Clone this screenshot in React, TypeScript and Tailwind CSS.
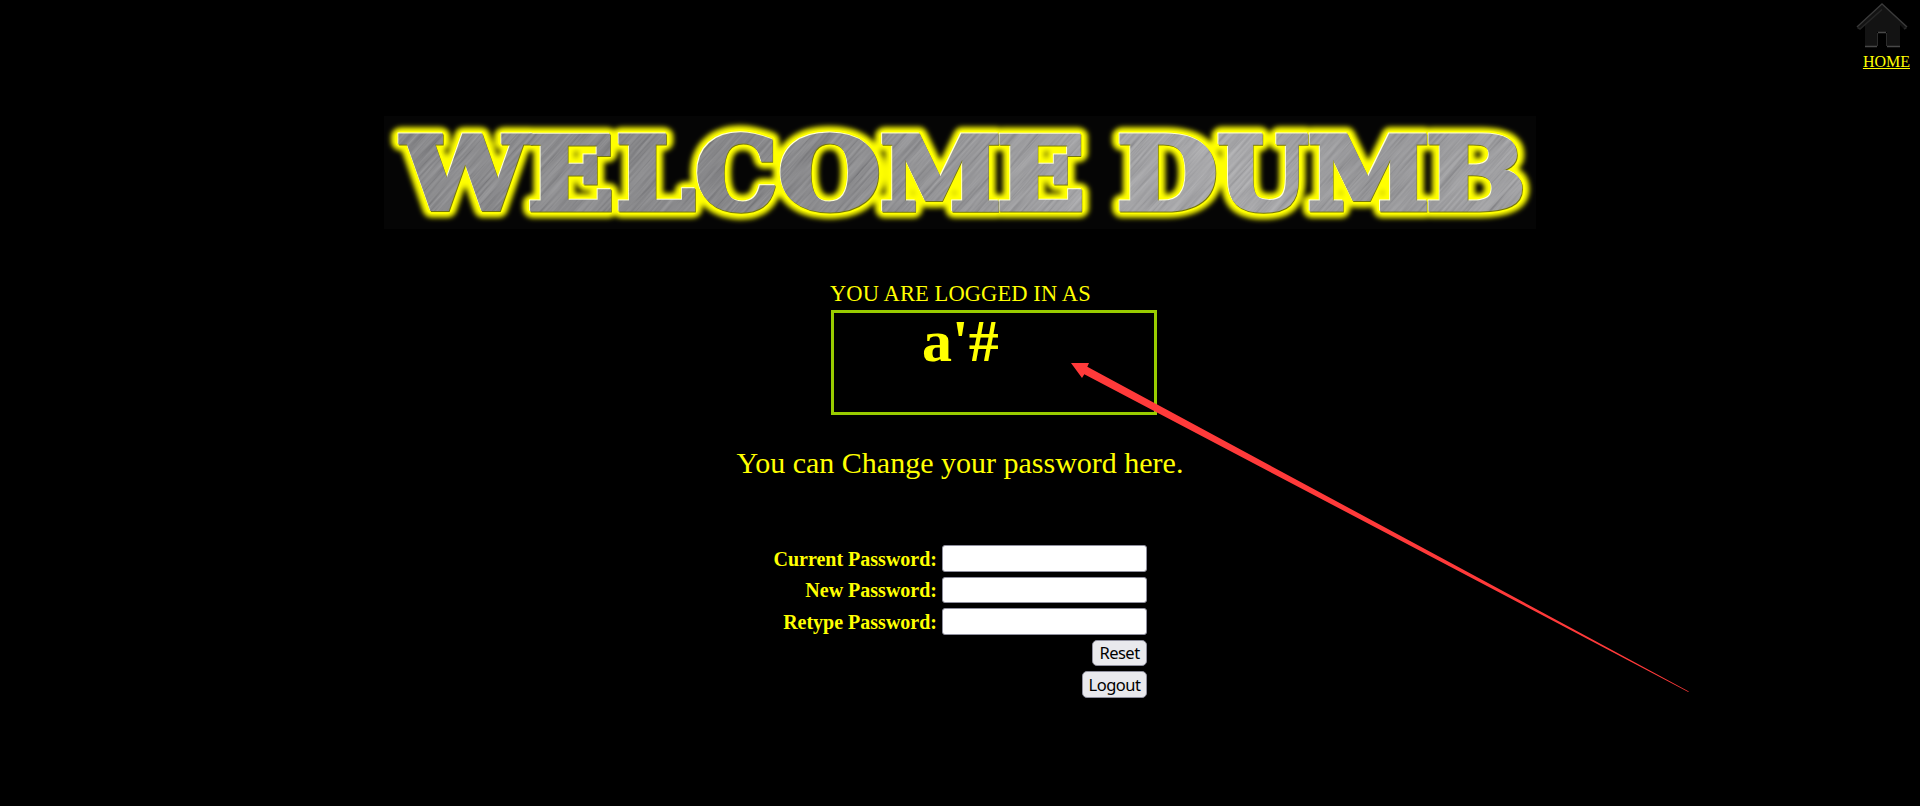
import React from "react";

type Letter = { char: string; left: number; right: number };

const BANNER: Letter[] = [
  { char: "W", left: 14.5, right: 149 },
  { char: "E", left: 145.5, right: 228 },
  { char: "L", left: 234, right: 312 },
  { char: "C", left: 313, right: 391 },
  { char: "O", left: 396.5, right: 494.5 },
  { char: "M", left: 498, right: 614.5 },
  { char: "E", left: 615, right: 698.5 },
  { char: "D", left: 735, right: 832 },
  { char: "U", left: 834, right: 925 },
  { char: "M", left: 925.5, right: 1042.5 },
  { char: "B", left: 1044, right: 1138 },
];

const FONT_SIZE = 100;
const WEIGHT = 5.5;

function placeLetters() {
  const ctx = document.createElement("canvas").getContext("2d")!;
  ctx.font = `bold ${FONT_SIZE}px "DejaVu Serif"`;
  return BANNER.map(({ char, left, right }) => {
    const m = ctx.measureText(char);
    const ink = m.actualBoundingBoxRight + m.actualBoundingBoxLeft;
    const scale = (right - left - WEIGHT) / ink;
    const x = left + WEIGHT / 2 + m.actualBoundingBoxLeft * scale;
    return { char, transform: `translate(${x} 93) scale(${scale} 1)` };
  });
}

function Letters() {
  return (
    <>
      {placeLetters().map((l, i) => (
        <text
          key={i}
          transform={l.transform}
          fontFamily="'DejaVu Serif', serif"
          fontWeight="bold"
          fontSize={FONT_SIZE}
          vectorEffect="non-scaling-stroke"
        >
          {l.char}
        </text>
      ))}
    </>
  );
}

function Banner() {
  return (
    <svg width="1152" height="113" viewBox="0 0 1152 113" className="block overflow-visible bg-[#050505]">
      <defs>
        <filter id="glow" x="-5%" y="-30%" width="110%" height="160%">
          <feGaussianBlur stdDeviation="2.6" />
        </filter>
        <filter id="brushed" x="0" y="0" width="100%" height="100%">
          <feTurbulence type="fractalNoise" baseFrequency="0.015 0.4" numOctaves="3" seed="4" />
          <feColorMatrix values="0.9 0 0 0 0  0.9 0 0 0 0  0.9 0 0 0 0.02  0 0 0 0 1" />
        </filter>
        <linearGradient id="sheen">
          <stop offset="0" stopColor="#767678" />
          <stop offset="0.12" stopColor="#7e7e80" />
          <stop offset="0.3" stopColor="#747476" />
          <stop offset="0.45" stopColor="#828284" />
          <stop offset="0.6" stopColor="#9b9b9d" />
          <stop offset="0.75" stopColor="#a4a4a6" />
          <stop offset="0.85" stopColor="#8a8a8c" />
          <stop offset="1" stopColor="#9c9c9e" />
        </linearGradient>
        <mask id="letters" maskUnits="userSpaceOnUse" x="0" y="0" width="1152" height="113">
          <g fill="#fff" stroke="#fff" strokeWidth={WEIGHT}>
            <Letters />
          </g>
        </mask>
      </defs>
      <g filter="url(#glow)" fill="#ff0" stroke="#ff0" strokeWidth="19" strokeLinejoin="round">
        <Letters />
      </g>
      <g fill="#ff0" stroke="#ff0" strokeWidth="11" strokeLinejoin="round">
        <Letters />
      </g>
      <g transform="translate(-0.9 -0.9)" fill="#ffffd8" stroke="#ffffd8" strokeWidth={WEIGHT}>
        <Letters />
      </g>
      <g transform="translate(0.7 0.8)" fill="#77770a" stroke="#77770a" strokeWidth={WEIGHT}>
        <Letters />
      </g>
      <g mask="url(#letters)">
        <rect width="1152" height="113" fill="url(#sheen)" />
        <g opacity="0.3" transform="rotate(-48 576 56)">
          <rect x="-20" y="-500" width="1192" height="1113" filter="url(#brushed)" />
        </g>
      </g>
    </svg>
  );
}

function HomeIcon() {
  return (
    <svg width="54" height="48" viewBox="0 0 54 48" className="block -translate-x-px">
      <path d="M27 5 L3 27 L5 29 L10 25 V47 H22 V32 H32 V47 H45 V25 L49 29 L52 27 Z" fill="#131313" />
      <path d="M2 27 L27 4 L52 27" fill="none" stroke="#3a3a3a" strokeWidth="1.500" />
      <path d="M2.500 27.500 L5 29 L27 9.500 M49 29 L51.500 27.500" fill="none" stroke="#262626" strokeWidth="1.500" />
      <path d="M10 46.500 H22 M32 46.500 H45 M23 32.500 H31" stroke="#484848" strokeWidth="1.500" />
      <path d="M22.500 46 V33 M31.500 46 V33" stroke="#2c2c2c" />
    </svg>
  );
}

function Arrow() {
  return (
    <svg width="620" height="331" viewBox="1070 362 620 331" className="pointer-events-none absolute left-[1070px] top-[362px]">
      <path d="M1071 363 L1089 363 L1087.300 366.800 L1688.800 691.400 L1688.300 691.900 L1084.300 374.300 L1082 378 Z" fill="#ff3a3a" />
    </svg>
  );
}

function PasswordRow({ label }: { label: string }) {
  return (
    <label className="flex h-[26.500px] items-center justify-end gap-[5px] whitespace-nowrap text-[20px] font-bold">
      <span className="pt-px">{label}</span>
      <input type="password" className="h-full w-[205px] rounded-[3px] border border-[#8f8f9d] bg-white outline-none" />
    </label>
  );
}

function FormButton({ label, className }: { label: string; className: string }) {
  return (
    <button
      type="button"
      className={`flex h-[26.500px] items-center justify-center rounded-[5px] border border-[#8f8f9d] bg-[#e9e9ed] pt-px font-['Noto_Sans',sans-serif] text-[16.500px] leading-none tracking-[-0.500px] text-black ${className}`}
    >
      {label}
    </button>
  );
}

export default function App() {
  return (
    <div className="relative flex h-[806px] w-[1920px] flex-col items-center overflow-hidden bg-black font-['Liberation_Serif',serif] text-[#ff0]">
      <header className="flex h-[116px] w-full justify-end pr-[10px]">
        <a href="#" className="flex flex-col items-end">
          <HomeIcon />
          <span className="mt-[4px] text-[16px] leading-[20px] underline">HOME</span>
        </a>
      </header>
      <Banner />
      <section className="mt-[51px] ml-[68px] w-[326px]">
        <p className="-ml-px whitespace-nowrap text-[22.500px] leading-[27px] tracking-[0.1px]">YOU ARE LOGGED IN AS</p>
        <div className="mt-[3px] h-[105px] border-3 border-[#9c0] pl-[88px]">
          <p className="-mt-[2px] text-[60px] leading-[60px] font-bold">a'#</p>
        </div>
      </section>
      <p className="mt-[31px] text-[30px] leading-[34px]">You can Change your password here.</p>
      <form className="mt-[65px] flex w-[374px] flex-col items-end gap-[5px]">
        <PasswordRow label="Current Password:" />
        <PasswordRow label="New Password:" />
        <PasswordRow label="Retype Password:" />
        <FormButton label="Reset" className="w-[55px]" />
        <FormButton label="Logout" className="w-[65px]" />
      </form>
      <Arrow />
    </div>
  );
}
